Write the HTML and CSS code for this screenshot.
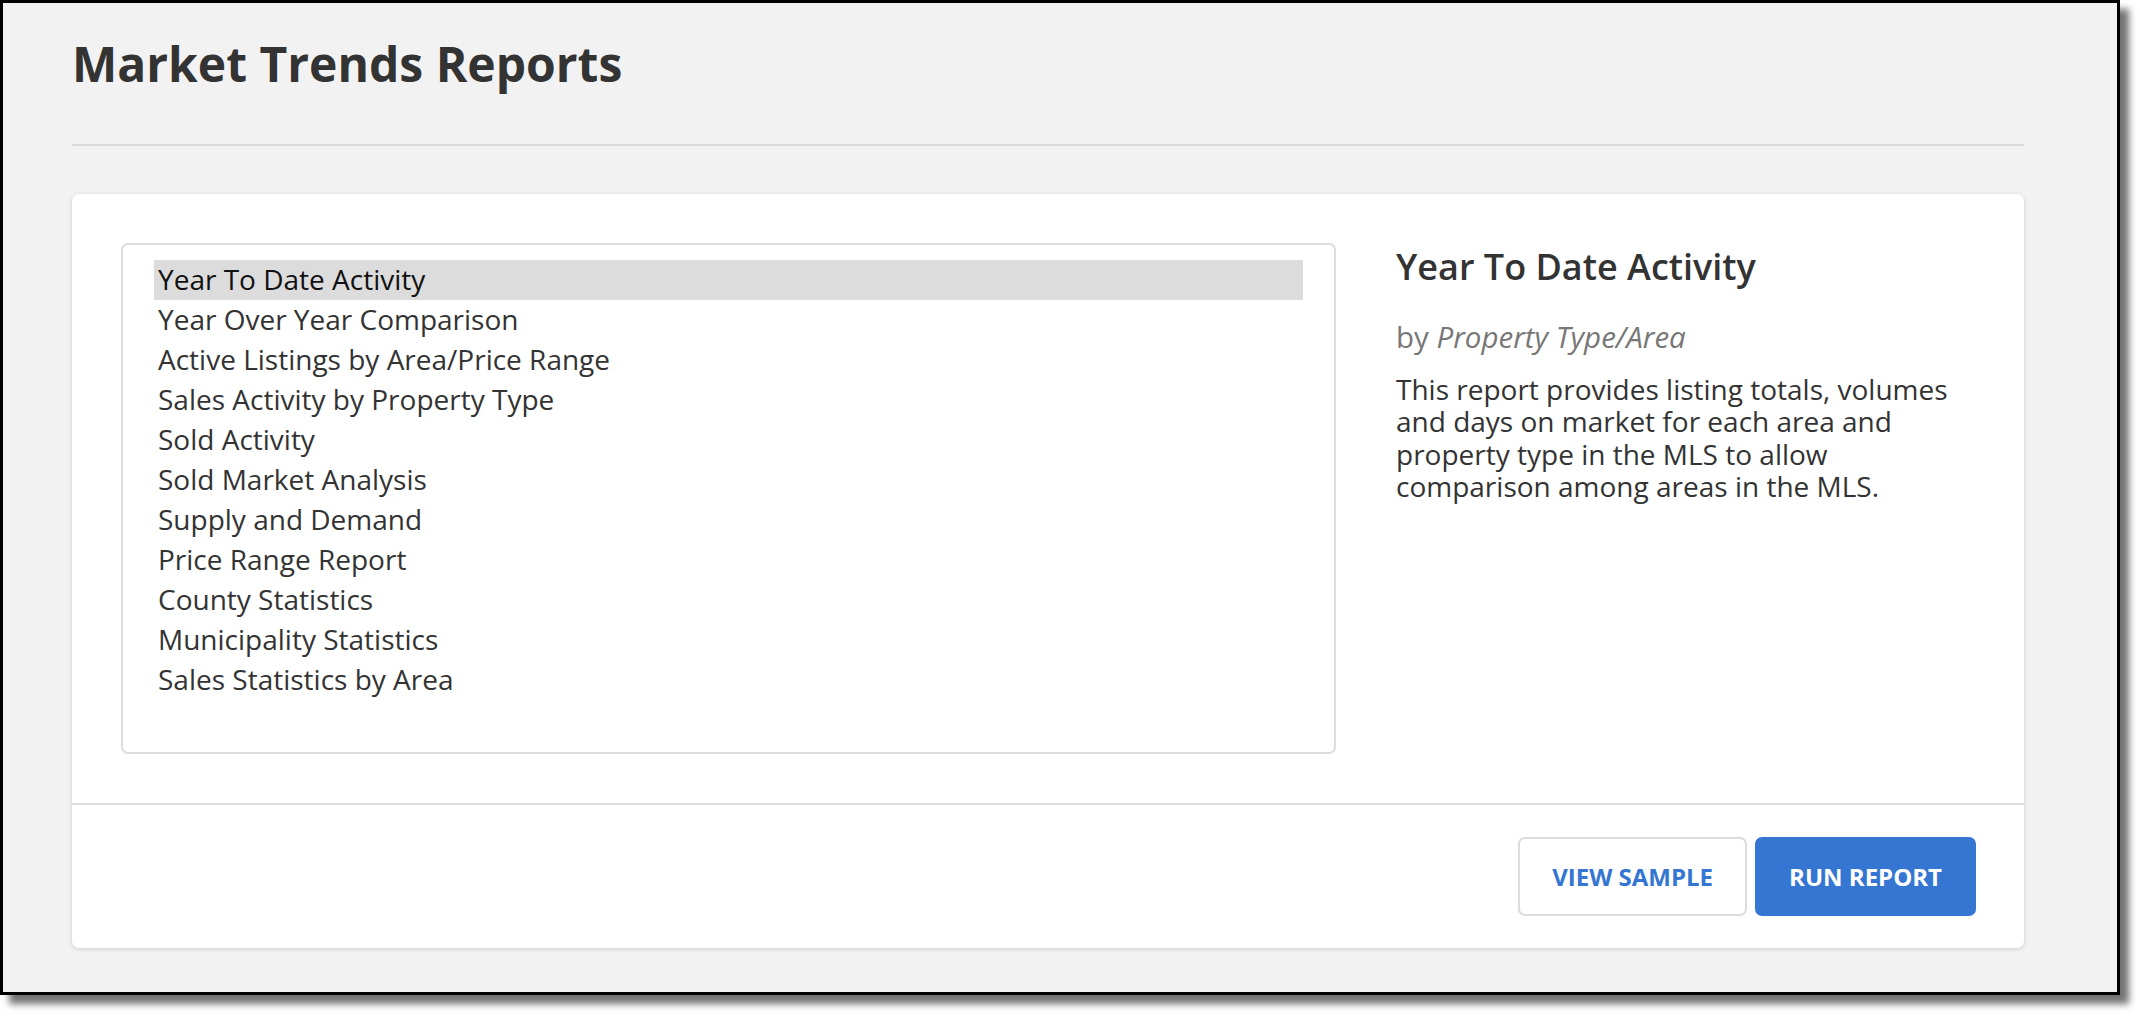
FILE: index.html
```html
<!DOCTYPE html>
<html lang="en">
<head>
<meta charset="utf-8">
<title>Market Trends Reports</title>
<link rel="stylesheet" href="styles.css">
</head>
<body>
<div class="frame">
  <div class="page">
    <h1 class="page-title">Market Trends Reports</h1>
    <hr class="rule">
    <section class="card">
      <div class="card-body">
        <div class="listbox">
          <ul class="report-list">
            <li class="report-item selected">Year To Date Activity</li>
            <li class="report-item">Year Over Year Comparison</li>
            <li class="report-item">Active Listings by Area/Price Range</li>
            <li class="report-item">Sales Activity by Property Type</li>
            <li class="report-item">Sold Activity</li>
            <li class="report-item">Sold Market Analysis</li>
            <li class="report-item">Supply and Demand</li>
            <li class="report-item">Price Range Report</li>
            <li class="report-item">County Statistics</li>
            <li class="report-item">Municipality Statistics</li>
            <li class="report-item">Sales Statistics by Area</li>
          </ul>
        </div>
        <div class="details">
          <h2 class="details-title">Year To Date Activity</h2>
          <p class="details-by">by <em>Property Type/Area</em></p>
          <p class="details-desc">This report provides listing totals, volumes and days on market for each area and property type in the MLS to allow comparison among areas in the MLS.</p>
        </div>
      </div>
      <div class="card-footer">
        <button class="btn btn-outline">VIEW SAMPLE</button>
        <button class="btn btn-primary">RUN REPORT</button>
      </div>
    </section>
  </div>
</div>
</body>
</html>
```
FILE: styles.css
```css
* {
  box-sizing: border-box;
}

html, body {
  margin: 0;
  padding: 0;
  background: #ffffff;
}

body {
  font-family: "Open Sans", "Noto Sans", "Liberation Sans", sans-serif;
  color: #333333;
  width: 2140px;
  height: 1016px;
  overflow: hidden;
}

.frame {
  width: 2120px;
  height: 995px;
  border: 3px solid #000000;
  background: #f2f2f2;
  box-shadow: 9px 9px 7px rgba(0, 0, 0, 0.55);
}

.page {
  padding: 28px 93px 0 69px;
}

.page-title {
  margin: 0;
  font-size: 48px;
  font-weight: 700;
  line-height: 65px;
  color: #333333;
}

.rule {
  margin: 48px 0 0 0;
  border: 0;
  height: 2px;
  background: #d9d9d9;
}

.card {
  margin-top: 48px;
  background: #ffffff;
  border-radius: 7px;
  box-shadow: 0 1px 4px rgba(0, 0, 0, 0.16);
}

.card-body {
  display: flex;
  gap: 60px;
  padding: 49px 49px 49px 49px;
  border-bottom: 2px solid #dedede;
}

.listbox {
  width: 1215px;
  height: 511px;
  flex: none;
  border: 2px solid #dcdcdc;
  border-radius: 7px;
  padding: 15px 31px;
}

.report-list {
  list-style: none;
  margin: 0;
  padding: 0;
}

.report-item {
  font-size: 28px;
  line-height: 34px;
  padding: 2px 4px 4px 4px;
  color: #333333;
  white-space: nowrap;
}

.report-item.selected {
  background: #dcdcdc;
  color: #111111;
}

.details {
  flex: 1;
  min-width: 0;
}

.details-title {
  margin: 0;
  font-size: 36px;
  font-weight: 600;
  line-height: 48px;
  color: #333333;
}

.details-by {
  margin: 26px 0 0 0;
  font-size: 29.5px;
  line-height: 40px;
  color: #777777;
}

.details-by em {
  font-style: italic;
}

.details-desc {
  margin: 16px 0 0 0;
  font-size: 28px;
  line-height: 32.4px;
  color: #333333;
}

.card-footer {
  display: flex;
  justify-content: flex-end;
  gap: 8px;
  padding: 32px 48px 32px 0;
}

.btn {
  font-family: "Open Sans", "Noto Sans", "Liberation Sans", sans-serif;
  font-size: 24px;
  font-weight: 700;
  height: 79px;
  padding: 0 32px;
  border-radius: 7px;
  cursor: pointer;
}

.btn-outline {
  background: #ffffff;
  color: #3576d3;
  border: 2px solid #dcdcdc;
}

.btn-primary {
  background: #3576d3;
  color: #ffffff;
  border: 2px solid #3576d3;
}
```
